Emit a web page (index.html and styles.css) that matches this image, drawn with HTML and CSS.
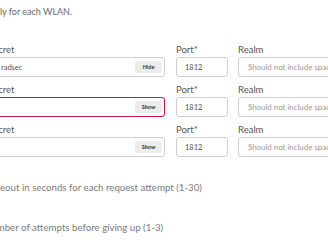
FILE: index.html
```html
<!DOCTYPE html>
<html lang="en">
<head>
    <meta charset="UTF-8">
    <meta name="viewport" content="width=device-width, initial-scale=1.0">
    <title>RadSec Servers</title>
    <link rel="stylesheet" href="styles.css">
</head>
<body>
    <div class="form">
        <p class="intro">ly for each WLAN.</p>

        <div class="server-row">
            <div class="field secret">
                <label>Secret</label>
                <div class="secret-box">
                    <input type="text" value="radsec">
                    <button class="toggle">Hide</button>
                </div>
            </div>
            <div class="field port">
                <label>Port*</label>
                <input type="text" value="1812">
            </div>
            <div class="field realm">
                <label>Realm</label>
                <input type="text" placeholder="Should not include spaces">
            </div>
        </div>

        <div class="server-row">
            <div class="field secret">
                <label>Secret</label>
                <div class="secret-box">
                    <input type="password" class="invalid">
                    <button class="toggle">Show</button>
                </div>
            </div>
            <div class="field port">
                <label>Port*</label>
                <input type="text" value="1812">
            </div>
            <div class="field realm">
                <label>Realm</label>
                <input type="text" placeholder="Should not include spaces">
            </div>
        </div>

        <div class="server-row">
            <div class="field secret">
                <label>Secret</label>
                <div class="secret-box">
                    <input type="password">
                    <button class="toggle">Show</button>
                </div>
            </div>
            <div class="field port">
                <label>Port*</label>
                <input type="text" value="1812">
            </div>
            <div class="field realm">
                <label>Realm</label>
                <input type="text" placeholder="Should not include spaces">
            </div>
        </div>

        <p class="helper timeout-help">Timeout in seconds for each request attempt (1-30)</p>
        <p class="helper retry-help">Number of attempts before giving up (1-3)</p>
    </div>
</body>
</html>
```

FILE: styles.css
```css
* {
    margin: 0;
    padding: 0;
    box-sizing: border-box;
    font-family: Lato, 'Noto Sans', sans-serif;
}

body {
    background: #fff;
    overflow: hidden;
}

.form {
    margin-left: -12px;
    padding-top: 6px;
    width: 420px;
}

.intro {
    margin-left: 12px;
    font-size: 9px;
    line-height: 12px;
    color: #6b6b6b;
    margin-bottom: 26px;
}

.server-row {
    display: flex;
    margin-bottom: 7px;
}

.field label {
    display: block;
    font-size: 9.5px;
    line-height: 12px;
    color: #555;
    margin-bottom: 1px;
}

.field input {
    display: block;
    width: 100%;
    height: 20px;
    border: 1px solid #cfcfcf;
    border-radius: 3px;
    font-size: 7.5px;
    color: #555;
    padding: 0 8px;
    outline: none;
}

.field input::placeholder {
    color: #9a9a9a;
}

.field input.invalid {
    border-color: #c2184b;
}

.secret {
    width: 177px;
}

.secret input {
    padding-left: 12px;
}

.secret-box {
    position: relative;
}

.toggle {
    position: absolute;
    right: 3px;
    top: 4px;
    width: 27px;
    height: 12px;
    border: none;
    border-radius: 2px;
    background: #ececec;
    color: #333;
    font-size: 5.5px;
    font-weight: 700;
    line-height: 12px;
}

.port {
    width: 52px;
    margin-left: 11px;
}

.realm {
    width: 120px;
    margin-left: 10px;
}

.realm input {
    padding-left: 9px;
    font-size: 7.9px;
}

.helper {
    font-size: 9.7px;
    line-height: 12px;
    color: #7a7a7a;
    margin-left: -4px;
}

.timeout-help {
    margin-top: 24px;
}

.retry-help {
    margin-top: 28px;
}
```
